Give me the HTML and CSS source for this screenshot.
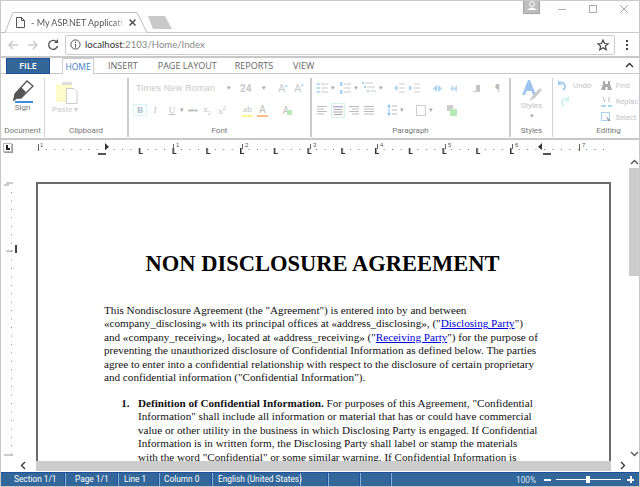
FILE: index.html
```html
<!DOCTYPE html>
<html lang="en">

<head>
    <meta charset="UTF-8">
    <title>My ASP.NET Application</title>
    <link rel="stylesheet" href="styles.css">
</head>

<body>
    <div class="window">
        <!-- browser title bar -->
        <div class="titlebar">
            <div class="tab">
                <svg class="tab-shape" width="148" height="21" viewBox="0 0 148 21">
                    <path d="M0 20.5H4L12 .5H136L146 20.5" fill="#fff" stroke="#bdbdbd"/>
                </svg>
                <svg class="tab-icon" width="9" height="11" viewBox="0 0 9 11">
                    <path d="M.5 .5H5.500L8.500 3.500V10.500H.5Z M5.500 .5V3.500H8.500" fill="#fff" stroke="#555"/>
                </svg>
                <span class="tab-title">- My ASP.NET Application</span>
                <svg class="tab-close" width="7" height="7" viewBox="0 0 7 7">
                    <path d="M.5 .5L6.500 6.500M6.500 .5L.5 6.500" stroke="#444" stroke-width="1.300"/>
                </svg>
            </div>
            <svg class="newtab" width="25" height="13" viewBox="0 0 25 13">
                <path d="M0 0H17L24 13H5Z" fill="#c9c9c9"/>
            </svg>
            <div class="profile">
                <svg width="12" height="11" viewBox="0 0 12 11">
                    <circle cx="6" cy="3" r="2.500" fill="none" stroke="#fff"/>
                    <path d="M1 9Q6 4 11 9Z" fill="#fff"/>
                </svg>
            </div>
            <div class="winbtns">
                <svg width="10" height="10" viewBox="0 0 10 10"><path d="M1 5.500H9" stroke="#aaa"/></svg>
                <svg width="10" height="10" viewBox="0 0 10 10"><rect x="1.500" y="1.500" width="7" height="7" fill="none" stroke="#aaa"/></svg>
                <svg width="10" height="10" viewBox="0 0 10 10"><path d="M1 1L9 9M9 1L1 9" stroke="#aaa"/></svg>
            </div>
        </div>

        <!-- address bar -->
        <div class="toolbar">
            <svg width="12" height="12" viewBox="0 0 12 12"><path d="M11 6H2M6 2L2 6L6 10" fill="none" stroke="#ccc" stroke-width="1.500"/></svg>
            <svg width="12" height="12" viewBox="0 0 12 12"><path d="M1 6H10M6 2L10 6L6 10" fill="none" stroke="#ccc" stroke-width="1.500"/></svg>
            <svg width="12" height="12" viewBox="0 0 12 12"><path d="M10 3.500A4.500 4.500 0 1 0 10.500 7" fill="none" stroke="#555" stroke-width="1.400"/><path d="M7 4H11V0Z" fill="#555"/></svg>
            <div class="omnibox">
                <svg width="11" height="11" viewBox="0 0 11 11"><circle cx="5.500" cy="5.500" r="4.600" fill="none" stroke="#555"/><path d="M5.500 5V8.500M5.500 2.500V4" stroke="#555"/></svg>
                <span class="url"><b>localhost</b>:2103/Home/Index</span>
                <svg class="star" width="12" height="12" viewBox="0 0 12 12"><path d="M6 1L7.500 4.500L11 4.800L8.400 7.100L9.200 10.700L6 8.800L2.800 10.700L3.600 7.100L1 4.800L4.500 4.500Z" fill="none" stroke="#444" stroke-width="1.200"/></svg>
            </div>
            <div class="kebab"><i></i><i></i><i></i></div>
        </div>

        <!-- ribbon tabs -->
        <ul class="tabs">
            <li class="tab-file">FILE</li>
            <li class="tab-home">HOME</li>
            <li class="tab-insert">INSERT</li>
            <li class="tab-page">PAGE LAYOUT</li>
            <li class="tab-reports">REPORTS</li>
            <li class="tab-view">VIEW</li>
            <li class="collapse">
                <svg width="9" height="6" viewBox="0 0 9 6"><path d="M1 5L4.500 1.500L8 5" fill="none" stroke="#333" stroke-width="1.400"/></svg>
            </li>
        </ul>

        <!-- ribbon -->
        <div class="ribbon">
            <div class="group g-document">
                <div class="group-body sign">
                    <svg width="22" height="21" viewBox="0 0 22 21">
                        <path d="M3 14L15 1L21 6L9 18H5L2 20Z" fill="#fff" stroke="#555" stroke-width="1.300"/>
                        <path d="M3 14L9 7L14 12L9 18H5L1 21Z" fill="#555"/>
                    </svg>
                    <i class="sign-line"></i>
                    <span>Sign</span>
                </div>
                <div class="group-label">Document</div>
            </div>
            <div class="group g-clipboard">
                <div class="group-body paste">
                    <svg width="22" height="22" viewBox="0 0 22 22">
                        <rect x="0" y="2" width="16" height="18" fill="#fdfbc9"/>
                        <rect x="6" y="0" width="10" height="3" fill="#ddd"/>
                        <path d="M10.500 6.500H18L21 9.500V21.500H10.500Z" fill="#fff" stroke="#ccc"/>
                    </svg>
                    <span class="paste-text">Paste ▾</span>
                </div>
                <div class="group-label">Clipboard</div>
            </div>
            <div class="group g-font">
                <div class="group-body font-tools">
                    <div class="row">
                        <span class="pick font-name">Times New Roman</span><span class="arrow">▾</span>
                        <span class="pick font-size">24</span><span class="arrow">▾</span>
                        <span class="pick grow">A<sup>▴</sup></span>
                        <span class="pick grow shrink">A<sup>▾</sup></span>
                    </div>
                    <div class="row row-2">
                        <span class="fmt bold">B</span>
                        <span class="fmt italic"><em>I</em></span>
                        <span class="fmt under"><u>U</u></span><span class="arrow">▾</span>
                        <span class="fmt strike">abc</span>
                        <span class="fmt sub-btn">x<sub>2</sub></span>
                        <span class="fmt sup-btn">x<sup>2</sup></span>
                        <span class="fmt hilite">ab</span>
                        <span class="fmt color">A</span>
                        <span class="fmt clear">A<i></i></span>
                    </div>
                </div>
                <div class="group-label">Font</div>
            </div>
            <div class="group g-paragraph">
                <div class="group-body para-tools">
                    <div class="row">
                        <svg width="11" height="12" viewBox="0 0 11 12"><path d="M4 2H11M4 6H11M4 10H11" stroke="#ccc"/><path d="M0 1H2.500V3H0ZM0 5H2.500V7H0ZM0 9H2.500V11H0Z" fill="#a8d4f5"/></svg><span class="arrow">▾</span>
                        <svg class="ml-5" width="11" height="12" viewBox="0 0 11 12"><path d="M4 2H11M4 6H11M4 10H11" stroke="#ccc"/><path d="M0 0H2.500V4H0ZM0 8H2.500V12H0Z" fill="#a8d4f5"/></svg><span class="arrow">▾</span>
                        <svg class="ml-4" width="14" height="12" viewBox="0 0 14 12"><path d="M3 1H11M5 5H13M8 9H14" stroke="#ccc"/><path d="M0 0H2V2H0ZM2 4H4V6H2ZM5 8H7V10H5Z" fill="#a8d4f5"/></svg><span class="arrow">▾</span>
                        <svg class="ml-11" width="11" height="10" viewBox="0 0 11 10"><path d="M5 1H11M5 5H11M5 9H11" stroke="#ccc"/><path d="M3.500 2V8L0 5Z" fill="#a8d4f5"/></svg>
                        <svg class="ml-4" width="11" height="10" viewBox="0 0 11 10"><path d="M5 1H11M5 5H11M5 9H11" stroke="#ccc"/><path d="M0 2V8L3.500 5Z" fill="#a8d4f5"/></svg>
                        <svg class="ml-13" width="9" height="9" viewBox="0 0 9 9"><path d="M4 1V8L0 4.500ZM5 1V8L9 4.500Z" fill="#a8d4f5"/></svg>
                        <svg class="ml-8" width="7" height="9" viewBox="0 0 7 9"><path d="M3.500 1V8L0 4.500ZM7 1V8L3.500 4.500Z" fill="#bcdcf5"/></svg>
                        <svg class="ml-16" width="7" height="8" viewBox="0 0 7 8"><path d="M0 7.500H7" stroke="#ccc"/><rect x="3" y="1" width="4" height="6" fill="#c4c4c4"/></svg>
                        <span class="pilcrow">¶</span>
                    </div>
                    <div class="row row-2">
                        <svg width="10" height="9" viewBox="0 0 10 9"><path d="M0 .5H10M0 3H7M0 5.500H10M0 8H7" stroke="#bbb"/></svg>
                        <span class="align-on"><svg width="10" height="9" viewBox="0 0 10 9"><path d="M0 .5H10" stroke="#b9b0e0" stroke-width="2"/><path d="M1 3.500H9M0 6H10M1 8.500H9" stroke="#aaa"/></svg></span>
                        <svg class="ml-4" width="10" height="9" viewBox="0 0 10 9"><path d="M0 .5H10M3 3H10M0 5.500H10M3 8H10" stroke="#bbb"/></svg>
                        <svg class="ml-5" width="10" height="9" viewBox="0 0 10 9"><path d="M0 .5H10M0 3H10M0 5.500H10M0 8H10" stroke="#bbb"/></svg>
                        <svg class="ml-13" width="10" height="12" viewBox="0 0 10 12"><path d="M2 0L4 3H0ZM2 12L4 9H0Z M1.500 3H2.500V9H1.500Z" fill="#8cc6f2"/><path d="M5 2H10M5 6H10M5 10H10" stroke="#bbb"/></svg><span class="arrow">▾</span>
                        <svg class="ml-12" width="10" height="11" viewBox="0 0 10 11"><path d="M.5 .5H9.500V10.500H.5Z" fill="#fff" stroke="#ccc"/></svg><span class="arrow">▾</span>
                        <svg class="ml-14" width="10" height="11" viewBox="0 0 10 11"><rect x="0" y="0" width="6" height="6" fill="#ccc"/><rect x="3" y="4" width="7" height="7" fill="#b5eab5"/></svg>
                    </div>
                </div>
                <div class="group-label">Paragraph</div>
            </div>
            <div class="group g-styles">
                <div class="group-body styles">
                    <svg width="20" height="21" viewBox="0 0 20 21">
                        <path d="M0 15L6 0H8L14 15H11L9.500 11H4.500L3 15Z" fill="#9cc5f0"/>
                        <path d="M7 21L11 15L18 8L20 10L13 18Z" fill="#ccc"/>
                    </svg>
                    <span>Styles</span>
                    <span class="arrow">▾</span>
                </div>
                <div class="group-label">Styles</div>
            </div>
            <div class="group g-editing">
                <div class="group-body editing">
                    <div class="edit-col">
                        <div class="edit-item">
                            <svg width="11" height="11" viewBox="0 0 11 11"><path d="M1 3A4 4 0 1 1 5 10" fill="none" stroke="#9cc9f2" stroke-width="1.800"/><path d="M0 0V5H4Z" fill="#9cc9f2"/></svg>
                            <span>Undo</span>
                        </div>
                        <div class="edit-item">
                            <svg width="11" height="11" viewBox="0 0 11 11"><path d="M10 3A4 4 0 1 0 6 10" fill="none" stroke="#c5eef2" stroke-width="1.500"/><path d="M11 0V5H7Z" fill="#c5eef2"/></svg>
                        </div>
                    </div>
                    <div class="edit-col">
                        <div class="edit-item">
                            <svg width="11" height="11" viewBox="0 0 11 11"><path d="M2 1H4V4H7V1H9V4L11 10H6.500V7H4.500V10H0L2 4Z" fill="#aaa"/></svg>
                            <span>Find</span>
                        </div>
                        <div class="edit-item">
                            <svg width="11" height="11" viewBox="0 0 11 11"><path d="M0 10H5M7 10H11" stroke="#a8d4f5" stroke-width="2"/><path d="M2 1L4 6M8 1V6" stroke="#bbb"/></svg>
                            <span>Replac</span>
                        </div>
                        <div class="edit-item">
                            <svg width="11" height="11" viewBox="0 0 11 11"><rect x=".5" y=".5" width="8" height="8" fill="none" stroke="#a8d4f5"/><path d="M5 4L10 9L7 9L8 11Z" fill="#999"/></svg>
                            <span>Select .</span>
                        </div>
                    </div>
                </div>
                <div class="group-label">Editing</div>
            </div>
        </div>

        <!-- horizontal ruler -->
        <div class="ruler">
            <span class="ruler-corner"><i></i></span>
            <svg class="ruler-marks" width="620" height="17" viewBox="0 0 620 17">
                <defs>
                    <pattern id="dots" width="8.440" height="17" patternUnits="userSpaceOnUse" x="30">
                        <rect x="0" y="9" width="1" height="1" fill="#777"/>
                    </pattern>
                    <pattern id="stops" width="33.750" height="17" patternUnits="userSpaceOnUse" x="122.750">
                        <path d="M0 8V14H4V13H1.500V8Z" fill="#333"/>
                    </pattern>
                </defs>
                <rect x="30" y="0" width="558" height="17" fill="url(#dots)"/>
                <rect x="122" y="0" width="378" height="17" fill="url(#stops)"/>
                <path d="M22.500 4V11M157.500 4V11M226.500 4V9M294.500 4V9M361.500 4V9M429.500 4V9M496.500 4V9M563.500 4V11" stroke="#666"/>
                <g class="ruler-num">
                    <text x="24" y="7">1</text>
                    <text x="160" y="7">1</text>
                    <text x="229" y="7">2</text>
                    <text x="297" y="7">3</text>
                    <text x="364" y="7">4</text>
                    <text x="432" y="7">5</text>
                    <text x="499" y="7">6</text>
                    <text x="566" y="7">7</text>
                </g>
                <path d="M89 3L93 7L89 10Z" fill="#333"/>
                <path d="M82 14H90" stroke="#555" stroke-width="2"/>
                <path d="M526 3L522 7L526 10Z" fill="#333"/>
                <path d="M527 14H535" stroke="#555" stroke-width="2"/>
            </svg>
        </div>

        <!-- document area -->
        <div class="workspace">
            <div class="vruler">
                <svg width="18" height="304" viewBox="0 0 18 304">
                    <defs>
                        <pattern id="vdots" width="18" height="8.440" patternUnits="userSpaceOnUse" y="35">
                            <rect x="10" y="0" width="1" height="1" fill="#888"/>
                        </pattern>
                    </defs>
                    <path d="M5 26H12M3 28H8" stroke="#999"/>
                    <rect x="0" y="35" width="18" height="269" fill="url(#vdots)"/>
                    <path d="M5 94H12M3 298H12" stroke="#999"/>
                    <path d="M15 88V96" stroke="#444" stroke-width="2"/>
                </svg>
            </div>
            <div class="docview">
                <div class="page">
                    <h1>NON DISCLOSURE AGREEMENT</h1>
                    <p>This Nondisclosure Agreement (the "Agreement") is entered into by and between<br>«company_disclosing» with its principal offices at «address_disclosing», ("<a href="#">Disclosing Party</a>")<br>and «company_receiving», located at «address_receiving» ("<a href="#">Receiving Party</a>") for the purpose of<br>preventing the unauthorized disclosure of Confidential Information as defined below. The parties<br>agree to enter into a confidential relationship with respect to the disclosure of certain proprietary<br>and confidential information ("Confidential Information").</p>
                    <ol>
                        <li><b>Definition of Confidential Information.</b> For purposes of this Agreement, "Confidential<br>Information" shall include all information or material that has or could have commercial<br>value or other utility in the business in which Disclosing Party is engaged. If Confidential<br>Information is in written form, the Disclosing Party shall label or stamp the materials<br>with the word "Confidential" or some similar warning. If Confidential Information is</li>
                    </ol>
                </div>
            </div>
            <div class="vscroll">
                <svg width="9" height="6" viewBox="0 0 9 6"><path d="M1 5L4.500 1.500L8 5" fill="none" stroke="#555" stroke-width="1.300"/></svg>
                <div class="vthumb"></div>
                <svg width="9" height="6" viewBox="0 0 9 6"><path d="M1 1L4.500 4.500L8 1" fill="none" stroke="#555" stroke-width="1.300"/></svg>
            </div>
        </div>

        <!-- horizontal scrollbar -->
        <div class="hscroll">
            <span class="harrow left">
                <svg width="6" height="9" viewBox="0 0 6 9"><path d="M5 1L1.500 4.500L5 8" fill="none" stroke="#333" stroke-width="1.300"/></svg>
            </span>
            <div class="hthumb"></div>
            <span class="harrow right">
                <svg width="6" height="9" viewBox="0 0 6 9"><path d="M1 1L4.500 4.500L1 8" fill="none" stroke="#333" stroke-width="1.300"/></svg>
            </span>
        </div>

        <!-- status bar -->
        <div class="status">
            <span class="st st-section">Section 1/1</span>
            <span class="st st-page">Page 1/1</span>
            <span class="st st-line">Line 1</span>
            <span class="st st-col">Column 0</span>
            <span class="st st-lang">English (United States)</span>
            <span class="st st-e1"></span>
            <span class="st st-e2"></span>
            <span class="st st-e3"></span>
            <span class="zoom-val">100%</span>
            <i class="zoom-minus"></i>
            <div class="slider"><i></i></div>
            <i class="zoom-plus"></i>
        </div>
    </div>
</body>

</html>
```

FILE: styles.css
```css
* {
    margin: 0;
    padding: 0;
    box-sizing: border-box;
    list-style: none;
}

html, body {
    width: 640px;
    height: 487px;
    overflow: hidden;
    background: #fff;
}

body {
    font-family: Roboto, "Liberation Sans", sans-serif;
    color: #666;
}

svg {
    display: block;
    flex: none;
}

.ml-4 { margin-left: 4px; }
.ml-5 { margin-left: 5px; }
.ml-8 { margin-left: 8px; }
.ml-11 { margin-left: 11px; }
.ml-12 { margin-left: 12px; }
.ml-13 { margin-left: 13px; }
.ml-14 { margin-left: 14px; }
.ml-16 { margin-left: 16px; }

.window {
    width: 640px;
    height: 487px;
    display: flex;
    flex-direction: column;
    border: 1px solid #c8c8c8;
    overflow: hidden;
}

/* title bar */
.titlebar {
    height: 32px;
    flex: none;
    position: relative;
    display: flex;
    align-items: flex-end;
    border-bottom: 1px solid #c8c8c8;
}

.tab {
    position: relative;
    width: 147px;
    height: 21px;
    margin-bottom: -1px;
    display: flex;
    align-items: center;
    padding-left: 15px;
}

.tab-shape {
    position: absolute;
    left: 0;
    top: 0;
}

.tab-icon,
.tab-close,
.tab-title {
    position: relative;
}

.tab-title {
    width: 93px;
    margin-left: 6px;
    overflow: hidden;
    white-space: nowrap;
    font: 9px Lato, sans-serif;
    color: #555;
    -webkit-mask-image: linear-gradient(to right, #000 90%, transparent);
    mask-image: linear-gradient(to right, #000 90%, transparent);
}

.tab-close {
    margin-left: 5px;
}

.newtab {
    margin-bottom: 3px;
}

.profile {
    position: absolute;
    left: 522px;
    top: -1px;
    width: 17px;
    height: 14px;
    background: #bdbdbd;
    border: 1px solid #a5a5a5;
    display: flex;
    justify-content: center;
}

.winbtns {
    position: absolute;
    right: 10px;
    top: 3px;
    display: flex;
    gap: 21px;
}

/* address bar */
.toolbar {
    height: 25px;
    flex: none;
    display: flex;
    align-items: center;
    gap: 8px;
    padding-left: 6px;
    border-bottom: 2px solid #c8c8c8;
}

.omnibox {
    width: 550px;
    height: 20px;
    margin-left: -2px;
    border: 1px solid #ccc;
    border-radius: 2px;
    display: flex;
    align-items: center;
    padding: 0 5px 0 4px;
    gap: 4px;
}

.url {
    font: 9.600px Lato, sans-serif;
    color: #888;
}

.url b {
    font-weight: 400;
    color: #333;
}

.star {
    margin-left: auto;
}

.kebab {
    margin-left: 3px;
    display: flex;
    flex-direction: column;
    gap: 2px;
}

.kebab i {
    width: 2px;
    height: 2px;
    background: #444;
}

/* ribbon tabs */
.tabs {
    height: 16px;
    flex: none;
    display: flex;
    align-items: flex-start;
    font: 9px/15px "Open Sans", sans-serif;
    border-bottom: 1px solid #c8c8c8;
    padding-left: 5px;
    color: #666;
}

.tabs li {
    white-space: nowrap;
}

.tabs .tab-file {
    width: 44px;
    height: 16px;
    line-height: 14px;
    background: #336699;
    border: 1px solid #1d4f9e;
    color: #fff;
    text-align: center;
    font-weight: 600;
}

.tabs .tab-home {
    margin-left: 12px;
    width: 32px;
    height: 16px;
    line-height: 15px;
    font-size: 8.500px;
    text-align: center;
    color: #3a7cc0;
    background: #fff;
    border: 1px solid #ccc;
    border-width: 1px 1px 0;
    border-radius: 1px 1px 0 0;
}

.tabs .tab-insert { margin-left: 14px; }
.tabs .tab-page { margin-left: 20px; }
.tabs .tab-reports { margin-left: 18px; }
.tabs .tab-view { margin-left: 20px; }

.tabs .collapse {
    margin-left: auto;
    margin-right: 5px;
    padding-top: 4px;
}

/* ribbon */
.ribbon {
    height: 66px;
    flex: none;
    display: flex;
    border-bottom: 2px solid #c8c8c8;
}

.group {
    display: flex;
    flex-direction: column;
    flex: none;
    border-right: 1px solid #d4d4d4;
    margin: 4px 0 1px;
}

.group-body {
    flex: 1;
    min-height: 0;
}

.group-label {
    height: 12px;
    font-size: 8px;
    line-height: 12px;
    text-align: center;
    color: #777;
    white-space: nowrap;
}

.g-document { width: 44px; }
.g-clipboard { width: 84px; border-right: 2px solid #ccc; }
.g-font { width: 183px; border-right: 2px solid #ccc; }
.g-paragraph { width: 199px; border-right: 2px solid #ccc; }
.g-styles { width: 42px; }
.g-editing { flex: 1; border-right: 0; }
.g-editing .group-label { padding-left: 24px; }

.sign {
    display: flex;
    flex-direction: column;
    align-items: center;
    padding-top: 2px;
    font-size: 8px;
    line-height: 10px;
    color: #777;
}

.sign-line {
    width: 18px;
    height: 2px;
    margin: 0 0 0 3px;
    background: #3a8ee0;
}

.paste {
    display: flex;
    flex-direction: column;
    padding: 4px 0 0 11px;
}

.paste-text {
    margin: 1px 0 0 -4px;
    font-size: 8px;
    line-height: 10px;
    color: #ccc;
}

.font-tools {
    padding: 2px 0 0 7px;
}

.para-tools {
    padding: 2px 0 0 5px;
}

.row {
    display: flex;
    align-items: center;
    height: 16px;
    white-space: nowrap;
    color: #c4c4c4;
}

.row-2 {
    margin-top: 7px;
    height: 14px;
}

.arrow {
    display: inline-block;
    width: 5px;
    font-size: 7px;
    text-align: center;
    color: #aaa;
    margin-left: 2px;
}

.pick {
    font-size: 10px;
    color: #c8c8c8;
}

.font-name {
    width: 88px;
    font-size: 9px;
    font-family: "Liberation Sans", sans-serif;
    letter-spacing: .2px;
}

.font-size {
    margin-left: 9px;
    width: 19px;
    font-weight: 700;
}

.grow {
    margin-left: 12px;
    width: 8px;
    font-size: 11px;
}

.grow.shrink {
    margin-left: 8px;
}

.grow sup {
    font-size: 5px;
    color: #a8d4f5;
}

.fmt {
    font: 9px "Liberation Serif", serif;
    color: #bbb;
    text-align: center;
    position: relative;
    flex: none;
}

.fmt sub,
.fmt sup {
    font-size: 6px;
}

.fmt.bold {
    margin-left: -3px;
    width: 14px;
    height: 12px;
    line-height: 10px;
    border: 1px solid #d8f4f8;
    font-weight: 700;
    color: #a9b9c9;
}

.fmt.italic { margin-left: 3px; width: 10px; }
.fmt.under { margin-left: 7px; width: 10px; }

.fmt.strike {
    text-decoration: line-through;
    font-size: 7px;
    margin-left: 3px;
    width: 12px;
}

.fmt.sub-btn { margin-left: 3px; width: 10px; }
.fmt.sup-btn { margin-left: 5px; width: 10px; }

.fmt.hilite {
    margin-left: 15px;
    width: 11px;
    padding-bottom: 1px;
    border-bottom: 2px solid #fdf58f;
}

.fmt.color {
    margin-left: 4px;
    width: 11px;
    font: 10px Roboto, sans-serif;
    border-bottom: 2px solid #f9b98a;
}

.fmt.clear {
    margin-left: 13px;
    width: 10px;
    font: 10px Roboto, sans-serif;
}

.fmt.clear i {
    position: absolute;
    right: -1px;
    bottom: 1px;
    width: 5px;
    height: 5px;
    background: #b5eab5;
}

.pilcrow {
    margin-left: 15px;
    font-size: 10px;
    color: #bbb;
}

.align-on {
    width: 14px;
    height: 15px;
    margin-left: 4px;
    border: 1px solid #d2f3f6;
    display: flex;
    align-items: center;
    justify-content: center;
    flex: none;
}

.styles {
    display: flex;
    flex-direction: column;
    align-items: center;
    padding-top: 2px;
    font-size: 8px;
    line-height: 10px;
    color: #c4c4c4;
}

.styles .arrow {
    margin: 0;
}

.editing {
    display: flex;
    padding: 1px 0 0 5px;
    font-size: 8px;
    color: #c4c4c4;
}

.edit-col {
    display: flex;
    flex-direction: column;
    gap: 4px;
}

.edit-col + .edit-col {
    margin-left: 9px;
    font-size: 7.500px;
}

.edit-item {
    height: 12px;
    display: flex;
    align-items: center;
    gap: 4px;
    white-space: nowrap;
}

/* ruler */
.ruler {
    height: 17px;
    flex: none;
    display: flex;
    background: #fff;
}

.ruler-corner {
    width: 9px;
    height: 9px;
    margin: 3px 0 0 2px;
    border: 1px solid #bbb;
    position: relative;
    flex: none;
    box-shadow: 1px 1px 0 #999;
}

.ruler-corner i {
    position: absolute;
    left: 2px;
    top: 1px;
    width: 4px;
    height: 5px;
    border-left: 2px solid #222;
    border-bottom: 2px solid #222;
}

.ruler-marks {
    margin-left: 4px;
}

.ruler-num text {
    font: 6px "Liberation Sans", sans-serif;
    fill: #555;
}

/* document */
.workspace {
    height: 304px;
    flex: none;
    display: flex;
    overflow: hidden;
}

.vruler {
    width: 35px;
    flex: none;
}

.docview {
    width: 593px;
    flex: none;
    overflow: hidden;
}

.page {
    width: 575px;
    height: 400px;
    margin-top: 25px;
    padding: 66px 68px 0 66px;
    border: 2px solid #6a6a6a;
    border-bottom: 0;
    font: 11.150px/13.450px "Liberation Serif", serif;
    color: #111;
    white-space: nowrap;
}

.page h1 {
    font: 700 22.500px/28px "Liberation Serif", serif;
    text-align: center;
    margin-bottom: 26px;
    color: #000;
}

.page a {
    color: #00d;
}

.page ol {
    margin-top: 12px;
    padding-left: 34px;
}

.page li {
    list-style: decimal;
}

.page li::marker {
    content: "1.\00a0\00a0\00a0";
    font-weight: 700;
}

.vscroll {
    flex: 1;
    background: #fff;
    display: flex;
    flex-direction: column;
    align-items: center;
    justify-content: space-between;
    padding: 2px 0 4px;
    position: relative;
}

.vthumb {
    position: absolute;
    left: 0;
    right: 0;
    top: 11px;
    height: 108px;
    background: #ccc;
}

.hscroll {
    height: 11px;
    flex: none;
    display: flex;
    align-items: flex-start;
    background: #fff;
}

.harrow {
    display: flex;
    justify-content: center;
    flex: none;
}

.harrow.left {
    width: 35px;
    padding-left: 9px;
}

.harrow.right {
    width: 24px;
}

.hthumb {
    width: 575px;
    height: 10px;
    flex: none;
    background: #ccc;
}

/* status bar */
.status {
    height: 14px;
    flex: none;
    display: flex;
    align-items: center;
    background: #336699;
    border-top: 1px solid #1d4f9e;
    font-size: 8.300px;
    color: #fff;
    white-space: nowrap;
}

.st {
    height: 13px;
    line-height: 13px;
    border-right: 1px solid #1d4f9e;
    box-shadow: 1px 0 0 #8cb0d8;
    padding-left: 13px;
    flex: none;
}

.st-section { width: 64px; }
.st-page { width: 53px; padding-left: 10px; }
.st-line { width: 41px; padding-left: 6px; }
.st-col { width: 53px; padding-left: 5px; }
.st-lang { width: 88px; padding-left: 6px; }
.st-e1 { width: 28px; }
.st-e2 { width: 32px; }
.st-e3 { width: 31px; }

.zoom-val {
    margin-left: 125px;
    width: 19px;
    color: #dde6f0;
    flex: none;
}

.zoom-minus,
.zoom-plus {
    display: block;
    width: 7px;
    height: 2px;
    background: #fff;
    position: relative;
    flex: none;
}

.zoom-minus { margin-left: 9px; }
.zoom-plus { margin-left: 6px; }

.zoom-plus::after {
    content: "";
    position: absolute;
    left: 2.500px;
    top: -2.500px;
    width: 2px;
    height: 7px;
    background: #fff;
}

.slider {
    width: 65px;
    height: 1px;
    margin-left: 5px;
    background: #fff;
    position: relative;
    flex: none;
}

.slider i {
    position: absolute;
    left: 30px;
    top: -3px;
    width: 4px;
    height: 7px;
    background: #fff;
}
```
